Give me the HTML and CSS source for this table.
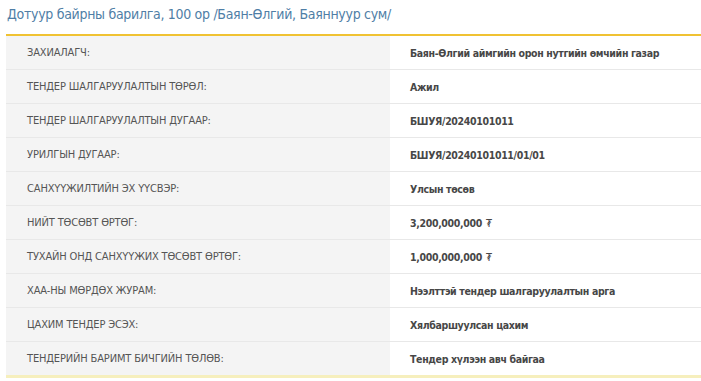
FILE: index.html
```html
<!DOCTYPE html>
<html lang="mn">
<head>
<meta charset="utf-8">
<title>Тендер</title>
<link rel="stylesheet" href="styles.css">
</head>
<body>
<h1 class="title">Дотуур байрны барилга, 100 ор /Баян-Өлгий, Баяннуур сум/</h1>
<div class="info">
  <div class="row"><div class="label">ЗАХИАЛАГЧ:</div><div class="value">Баян-Өлгий аймгийн орон нутгийн өмчийн газар</div></div>
  <div class="row"><div class="label">ТЕНДЕР ШАЛГАРУУЛАЛТЫН ТӨРӨЛ:</div><div class="value">Ажил</div></div>
  <div class="row"><div class="label">ТЕНДЕР ШАЛГАРУУЛАЛТЫН ДУГААР:</div><div class="value">БШУЯ/20240101011</div></div>
  <div class="row"><div class="label">УРИЛГЫН ДУГААР:</div><div class="value">БШУЯ/20240101011/01/01</div></div>
  <div class="row"><div class="label">САНХҮҮЖИЛТИЙН ЭХ ҮҮСВЭР:</div><div class="value">Улсын төсөв</div></div>
  <div class="row"><div class="label">НИЙТ ТӨСӨВТ ӨРТӨГ:</div><div class="value">3,200,000,000 <span class="cur">₮</span></div></div>
  <div class="row"><div class="label">ТУХАЙН ОНД САНХҮҮЖИХ ТӨСӨВТ ӨРТӨГ:</div><div class="value">1,000,000,000 <span class="cur">₮</span></div></div>
  <div class="row"><div class="label">ХАА-НЫ МӨРДӨХ ЖУРАМ:</div><div class="value">Нээлттэй тендер шалгаруулалтын арга</div></div>
  <div class="row"><div class="label">ЦАХИМ ТЕНДЕР ЭСЭХ:</div><div class="value">Хялбаршуулсан цахим</div></div>
  <div class="row"><div class="label">ТЕНДЕРИЙН БАРИМТ БИЧГИЙН ТӨЛӨВ:</div><div class="value">Тендер хүлээн авч байгаа</div></div>
</div>
</body>
</html>
```
FILE: styles.css
```css
html, body {
  margin: 0;
  padding: 0;
  background: #ffffff;
}
body {
  font-family: "DejaVu Sans Condensed", "DejaVu Sans", sans-serif;
  font-stretch: condensed;
}
.title {
  margin: 0;
  padding: 4px 0 0 7px;
  height: 30px;
  box-sizing: border-box;
  font-size: 14px;
  letter-spacing: -0.3px;
  font-weight: normal;
  color: #4f7ea6;
  line-height: 20px;
  white-space: nowrap;
}
.info {
  margin: 4px 0 0 6px;
  border-top: 2px solid #f0c232;
  border-bottom: 3px solid #f6efbd;
}
.row {
  display: grid;
  grid-template-columns: 384px 1fr;
  height: 33px;
  border-top: 1px solid #e8e8e8;
}
.row:first-child {
  border-top: none;
}
.label {
  background: #f4f4f4;
  color: #555555;
  font-size: 11px;
  letter-spacing: -0.15px;
  padding-left: 21px;
  display: flex;
  align-items: center;
}
.value {
  color: #474747;
  font-size: 10.5px;
  letter-spacing: -0.35px;
  font-weight: bold;
  padding-left: 20px;
  display: flex;
  align-items: center;
  white-space: nowrap;
}
.cur {
  font-weight: normal;
  margin-left: 4px;
}
```
